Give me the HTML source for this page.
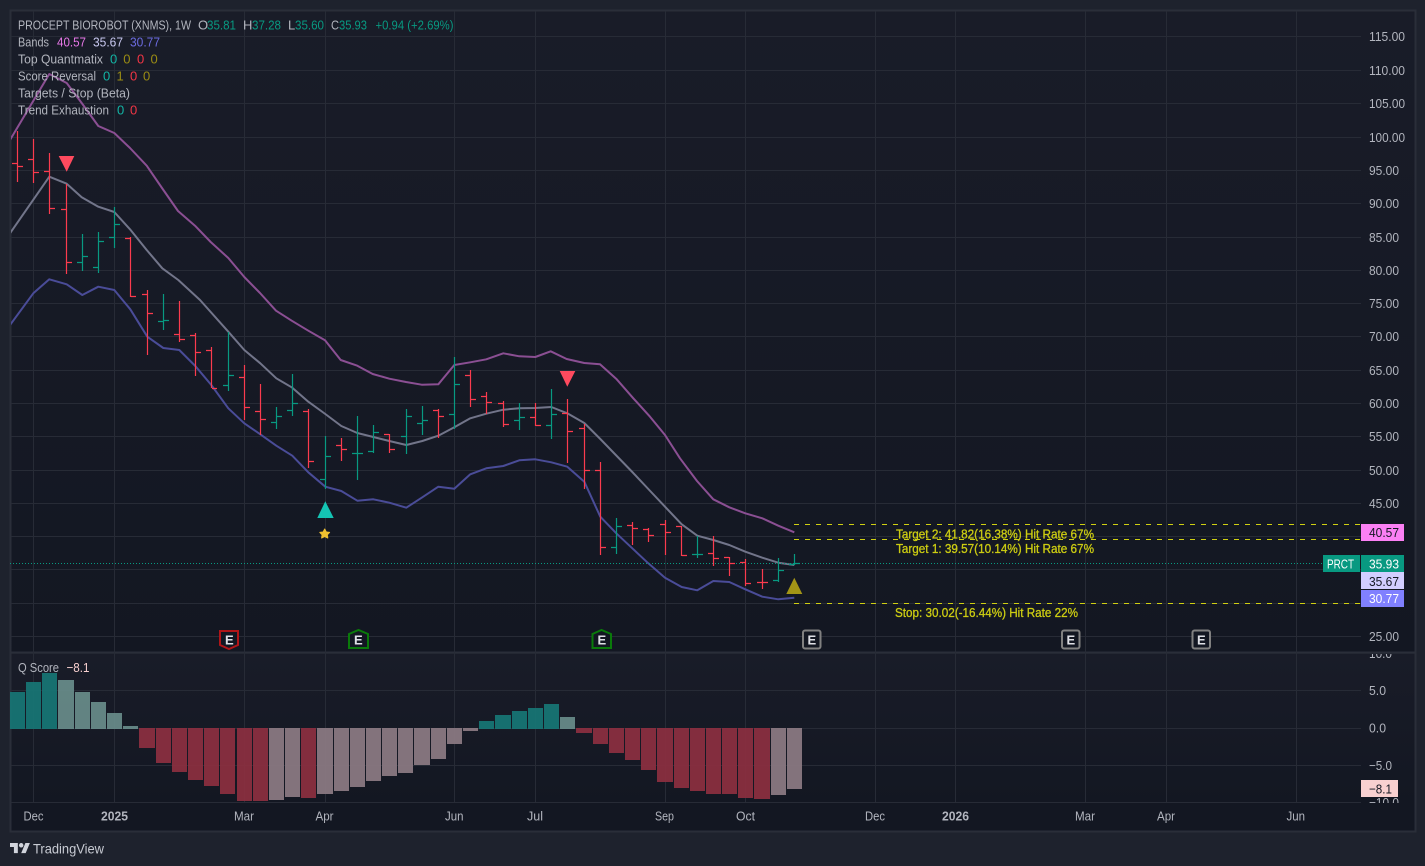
<!DOCTYPE html>
<html><head><meta charset="utf-8"><title>PRCT</title>
<style>
html,body{margin:0;padding:0;width:1425px;height:866px;overflow:hidden;background:#1e222d}
svg{position:absolute;left:0;top:0;display:block}
text{font-family:"Liberation Sans",sans-serif;font-size:13px;fill:#b2b5be}
.g{fill:#089981}.r{fill:#f23645}.t{fill:#12b5a5}.o{fill:#9a8c14}
.a{fill:#b2b5be}
.y{fill:#cdcd12;stroke:#cdcd12;stroke-width:.3}
</style></head><body>
<svg width="1425" height="866" viewBox="0 0 1425 866" xmlns="http://www.w3.org/2000/svg">
<defs>
<linearGradient id="p1" x1="0" y1="0" x2="0" y2="1"><stop offset="0" stop-color="#191c28"/><stop offset="1" stop-color="#131722"/></linearGradient>
<clipPath id="hc"><rect x="1361" y="654" width="54" height="149"/></clipPath>
<clipPath id="mc"><rect x="11" y="11" width="1350" height="641"/></clipPath>
</defs>
<rect width="1425" height="866" fill="#1e222d"/>
<rect x="11" y="11" width="1404" height="641" fill="url(#p1)"/>
<rect x="11" y="654" width="1404" height="149" fill="url(#p1)"/>
<rect x="11" y="803" width="1404" height="28" fill="#131722"/>
<!-- frame -->
<path d="M10.5 10.5H1415.5V831.5H10.5Z" fill="none" stroke="#2a2e39" stroke-width="2"/>
<path d="M11 652.5H1415" stroke="#2a2e39" stroke-width="2"/>
<!-- grid -->
<path stroke="#272b36" stroke-width="1" fill="none" d="M11 36.5H1361M11 70.5H1361M11 103.5H1361M11 137.5H1361M11 170.5H1361M11 203.5H1361M11 237.5H1361M11 270.5H1361M11 303.5H1361M11 336.5H1361M11 370.5H1361M11 403.5H1361M11 436.5H1361M11 470.5H1361M11 503.5H1361M11 536.5H1361M11 569.5H1361M11 603.5H1361M11 636.5H1361M11 690.5H1361M11 728.5H1361M11 765.5H1361M11 802.5H1361M33.5 11V802M114.5 11V802M244.5 11V802M325.5 11V802M454.5 11V802M535.5 11V802M665.5 11V802M745.5 11V802M875.5 11V802M955.5 11V802M1085.5 11V802M1166.5 11V802M1296.5 11V802"/>
<!-- histogram -->
<g opacity=".93">
<path fill="#177675" d="M10 692h15v37h-15zM26 682h15v47h-15zM42 673h15v56h-15zM479 721h15v8h-15zM495 715h16v14h-16zM512 711h15v18h-15zM528 708h15v21h-15zM544 704h15v25h-15z"/>
<path fill="#688c8a" d="M58 680h16v49h-16zM75 692h15v37h-15zM91 702h15v27h-15zM107 713h15v16h-15zM123 726h15v3h-15zM560 717h15v12h-15z"/>
<path fill="#8c2f40" d="M139 728h16v20h-16zM156 728h15v35h-15zM172 728h15v44h-15zM188 728h15v52h-15zM204 728h15v58h-15zM220 728h15v66h-15zM237 728h15v73h-15zM253 728h15v73h-15zM301 728h15v70h-15zM576 728h16v5h-16zM593 728h15v16h-15zM609 728h15v25h-15zM625 728h15v32h-15zM641 728h15v42h-15zM657 728h16v54h-16zM674 728h15v60h-15zM690 728h15v63h-15zM706 728h15v66h-15zM722 728h15v66h-15zM738 728h15v70h-15zM754 728h16v71h-16z"/>
<path fill="#8c7a83" d="M269 728h15v72h-15zM285 728h15v69h-15zM317 728h16v66h-16zM334 728h15v63h-15zM350 728h15v59h-15zM366 728h15v53h-15zM382 728h15v48h-15zM398 728h15v45h-15zM414 728h16v37h-16zM431 728h15v31h-15zM447 728h15v16h-15zM463 728h15v3h-15zM771 728h15v67h-15zM787 728h15v61h-15z"/>
</g>
<g clip-path="url(#mc)">
<!-- bands -->
<g fill="none" stroke-width="2" stroke-linejoin="round">
<path stroke="#8b4f93" d="M10 140L49.3 74L66.7 83L81.7 103L98.3 126L114.3 133L130 148L146.7 165.7L162 188L178 211L195 225.7L210.7 242L228.3 258L244.3 277L260 293L276 310.7L291.7 320.7L308.3 330.7L325 340.3L340.7 360L357.3 365.7L372.7 374L389.3 378.7L406 382L421.7 384.7L438.3 384.3L454.3 365L470.3 362.3L486.3 359.3L503.3 353.3L519.3 356.3L535.3 357L550.7 351.3L566.7 359L584.3 363L600 364.3L616.7 379.3L633.3 398.3L650 416.7L665 435L680 458.3L697 481L713.3 499.3L729.3 507.3L745.3 513.3L762.3 518.3L778.3 525.7L794.3 532.3"/>
<path stroke="#72758a" d="M10 233.3L49.3 176.7L66.7 183.7L81.7 197.3L98.3 206.7L114.3 212L130 229.3L146.7 250L162.3 268.3L178.3 280L200 300L228.3 331.7L244.3 350L260.3 363.3L276.3 378.3L292.3 387.7L308.3 401.7L325.3 414L341.3 426L357.3 433L373.3 437L389.3 441L406.3 445L422.3 441L438.3 435.7L454.3 427.3L470.3 418.3L486.3 413.7L503.3 409.7L519.3 408.3L535.3 408L551.3 407L567.3 413.3L584.3 423L600.3 439L616.3 455.5L632.3 472L648.3 489L665 506.7L681.7 524.3L697.3 535.7L713.3 540L729.3 545L745.3 551.7L762.3 557.7L778.3 562.7L794.3 565"/>
<path stroke="#4a4c98" d="M10 325L33.3 293.3L49.3 279.3L66.7 284.3L82.3 295L98.3 286.7L114.3 290L130.3 309.3L147.3 336.7L163.3 348L179.3 350L195.3 366L211.3 385L228.3 408.3L244.3 423.3L260.3 434.3L276.3 445.7L292.3 455.7L308.3 472.3L325.3 486.7L341.3 491L357.3 500.7L373.3 499.3L389.3 502.7L406.3 507.7L422.3 497.3L438.3 486.7L454.3 488.7L470.3 474.3L486.3 468.3L503.3 466L519.3 460.3L535.3 459.3L551.3 462.3L567.3 466.7L584.3 481.7L600.3 516.7L616.3 533.3L632.3 548.3L648.3 563.3L665 577.7L681.7 587L697.3 590.3L713.3 581L729.3 582L745.3 589.3L762.3 596.7L778.3 599.3L794.3 597.7"/>
</g>
</g>
<!-- dotted price line -->
<path d="M10 563.5H1323" stroke="#089981" stroke-width="1" stroke-dasharray="1 2" fill="none"/>
<!-- dashed target lines -->
<path d="M794 524.5H1361M794 539.5H1361M794 603.5H1361" stroke="#d0d012" stroke-width="1" stroke-dasharray="5 6" fill="none"/>
<!-- OHLC bars -->
<path stroke="#fb3b4e" stroke-width="1.2" fill="none" d="M17.5 131V182M12 163.5H17M18 166.5H23M33.5 139V183M28 159.5H33M34 172.5H39M49.5 153V214M44 171.5H49M50 208.5H55M66.5 184V274M61 209.5H66M67 262.5H72M130.5 237V297M125 238.5H130M131 296.5H136M147.5 290V355M142 294.5H147M148 313.5H153M179.5 301V342M174 334.5H179M180 339.5H185M195.5 333V376M190 335.5H195M196 352.5H201M211.5 347V388M206 350.5H211M212 388.5H217M244.5 365V420M239 377.5H244M245 407.5H250M260.5 384V435M255 411.5H260M261 419.5H266M308.5 409V468M303 411.5H308M309 461.5H314M341.5 438V461M336 445.5H341M342 449.5H347M389.5 434V453M384 434.5H389M390 449.5H395M438.5 409V438M433 410.5H438M439 416.5H444M470.5 370V407M465 375.5H470M471 399.5H476M486.5 392V414M481 396.5H486M487 402.5H492M503.5 401V427M498 403.5H503M504 424.5H509M535.5 403V426M530 417.5H535M536 425.5H541M567.5 399V463M562 413.5H567M568 431.5H573M584.5 424V489M579 428.5H584M585 470.5H590M600.5 462V555M595 470.5H600M601 547.5H606M632.5 522V545M627 525.5H632M633 528.5H638M648.5 528V542M643 529.5H648M649 535.5H654M665.5 520V555M660 524.5H665M666 532.5H671M681.5 526V556M676 526.5H681M682 555.5H687M713.5 536V566M708 553.5H713M714 558.5H719M729.5 557V576M724 557.5H729M730 563.5H735M745.5 559V586M740 562.5H745M746 583.5H751M762.5 569V589M757 582.5H762M763 582.5H768"/>
<path stroke="#089981" stroke-width="1.2" fill="none" d="M82.5 234V271M77 262.5H82M83 256.5H88M98.5 232V273M93 267.5H98M99 241.5H104M114.5 207V248M109 237.5H114M115 224.5H120M163.5 294V330M158 321.5H163M164 320.5H169M228.5 332V391M223 385.5H228M229 375.5H234M276.5 407V429M271 422.5H276M277 416.5H282M292.5 374V416M287 410.5H292M293 403.5H298M325.5 436V489M320 479.5H325M326 456.5H331M357.5 416V480M352 453.5H357M358 453.5H363M373.5 425V453M368 451.5H373M374 432.5H379M406.5 409V454M401 436.5H406M407 416.5H412M422.5 406V435M417 423.5H422M423 420.5H428M454.5 357V429M449 414.5H454M455 384.5H460M519.5 403V430M514 420.5H519M520 417.5H525M551.5 389V439M546 425.5H551M552 414.5H557M616.5 518V554M611 547.5H616M617 526.5H622M697.5 536V558M692 554.5H697M698 554.5H703M778.5 558V582M773 580.5H778M779 570.5H784M794.5 554V565M789 564.5H794M795 563.5H800"/>
<!-- markers -->
<path fill="#ff4a5e" d="M58.7 156H74.3L66.7 171.7ZM559.7 371H575.3L567.3 386.7Z"/>
<path fill="#14c4b4" d="M325.3 501.3L333.7 518H317.3Z"/>
<path fill="#a39516" d="M794.3 577.7L802.3 594H786.3Z"/>
<path fill="#efc030" stroke="#efc030" stroke-width="1" stroke-linejoin="round" d="M324.7 529L326.3 532L329.6 532.4L327.3 534.8L327.8 538L324.7 536.6L321.6 538L322.1 534.8L319.8 532.4L323.1 532Z"/>
<!-- earnings badges -->
<g fill="#131722" stroke-width="2">
<path stroke="#b01518" d="M220 631H238V645L229 649L220 645Z"/>
<path stroke="#0a7a0a" d="M349 634L358.5 630L368 634V648H349Z"/>
<path stroke="#0a7a0a" d="M592.5 634L601.5 630L611 634V648H592.5Z"/>
<rect x="803" y="630.5" width="17.5" height="18" rx="2" stroke="#808080"/>
<rect x="1062" y="630.5" width="17.5" height="18" rx="2" stroke="#808080"/>
<rect x="1192.5" y="630.5" width="17.5" height="18" rx="2" stroke="#808080"/>
</g>
<g>
<text x="225" y="644.5" style="fill:#dfe0e6;font-size:13px;font-weight:bold">E</text>
<text x="354" y="644.5" style="fill:#dfe0e6;font-size:13px;font-weight:bold">E</text>
<text x="597.5" y="644.5" style="fill:#dfe0e6;font-size:13px;font-weight:bold">E</text>
<text x="807.5" y="644.5" style="fill:#dfe0e6;font-size:13px;font-weight:bold">E</text>
<text x="1066.5" y="644.5" style="fill:#dfe0e6;font-size:13px;font-weight:bold">E</text>
<text x="1197" y="644.5" style="fill:#dfe0e6;font-size:13px;font-weight:bold">E</text>
</g>
<!-- target text -->
<text class="y" x="896" y="538.5" textLength="198" lengthAdjust="spacingAndGlyphs">Target 2: 41.82(16.38%) Hit Rate 67%</text>
<text class="y" x="896" y="553" textLength="198" lengthAdjust="spacingAndGlyphs">Target 1: 39.57(10.14%) Hit Rate 67%</text>
<text class="y" x="895" y="617" textLength="183" lengthAdjust="spacingAndGlyphs">Stop: 30.02(-16.44%) Hit Rate 22%</text>
<!-- legend -->
<text x="18" y="29.5" textLength="173" lengthAdjust="spacingAndGlyphs">PROCEPT BIOROBOT (XNMS), 1W</text>
<text x="198" y="29.5">O</text><text class="g" x="207" y="29.5" textLength="29" lengthAdjust="spacingAndGlyphs">35.81</text>
<text x="243" y="29.5">H</text><text class="g" x="252" y="29.5" textLength="29" lengthAdjust="spacingAndGlyphs">37.28</text>
<text x="288" y="29.5">L</text><text class="g" x="295" y="29.5" textLength="29" lengthAdjust="spacingAndGlyphs">35.60</text>
<text x="331" y="29.5" textLength="8" lengthAdjust="spacingAndGlyphs">C</text><text class="g" x="339" y="29.5" textLength="28" lengthAdjust="spacingAndGlyphs">35.93</text>
<text class="g" x="375.5" y="29.5" textLength="78" lengthAdjust="spacingAndGlyphs">+0.94 (+2.69%)</text>
<text x="18" y="46.5" textLength="31" lengthAdjust="spacingAndGlyphs">Bands</text>
<text x="57" y="46.5" textLength="29" lengthAdjust="spacingAndGlyphs" style="fill:#e878e8">40.57</text>
<text x="93" y="46.5" textLength="30" lengthAdjust="spacingAndGlyphs" style="fill:#c8c8f0">35.67</text>
<text x="130" y="46.5" textLength="30" lengthAdjust="spacingAndGlyphs" style="fill:#6c6ce0">30.77</text>
<text x="18" y="63.5" textLength="85" lengthAdjust="spacingAndGlyphs">Top Quantmatix</text>
<text class="t" x="110" y="63.5">0</text><text class="o" x="123.3" y="63.5">0</text><text class="r" x="137" y="63.5">0</text><text class="o" x="150.5" y="63.5">0</text>
<text x="18" y="80.5" textLength="78" lengthAdjust="spacingAndGlyphs">Score Reversal</text>
<text class="t" x="103" y="80.5">0</text><text class="o" x="116.5" y="80.5">1</text><text class="r" x="130" y="80.5">0</text><text class="o" x="143" y="80.5">0</text>
<text x="18" y="97.5" textLength="112" lengthAdjust="spacingAndGlyphs">Targets / Stop (Beta)</text>
<text x="18" y="114.5" textLength="91" lengthAdjust="spacingAndGlyphs">Trend Exhaustion</text>
<text class="t" x="117" y="114.5">0</text><text class="r" x="130" y="114.5">0</text>
<text x="18" y="672" textLength="41" lengthAdjust="spacingAndGlyphs">Q Score</text>
<text x="66.5" y="672" textLength="23" lengthAdjust="spacingAndGlyphs" style="fill:#f8d0d0">−8.1</text>
<!-- price axis -->
<g>
<text class="a" x="1369" y="41" textLength="36" lengthAdjust="spacingAndGlyphs">115.00</text>
<text class="a" x="1369" y="75" textLength="36" lengthAdjust="spacingAndGlyphs">110.00</text>
<text class="a" x="1369" y="108" textLength="36" lengthAdjust="spacingAndGlyphs">105.00</text>
<text class="a" x="1369" y="142" textLength="36" lengthAdjust="spacingAndGlyphs">100.00</text>
<text class="a" x="1369" y="175" textLength="30" lengthAdjust="spacingAndGlyphs">95.00</text>
<text class="a" x="1369" y="208" textLength="30" lengthAdjust="spacingAndGlyphs">90.00</text>
<text class="a" x="1369" y="242" textLength="30" lengthAdjust="spacingAndGlyphs">85.00</text>
<text class="a" x="1369" y="275" textLength="30" lengthAdjust="spacingAndGlyphs">80.00</text>
<text class="a" x="1369" y="308" textLength="30" lengthAdjust="spacingAndGlyphs">75.00</text>
<text class="a" x="1369" y="341" textLength="30" lengthAdjust="spacingAndGlyphs">70.00</text>
<text class="a" x="1369" y="375" textLength="30" lengthAdjust="spacingAndGlyphs">65.00</text>
<text class="a" x="1369" y="408" textLength="30" lengthAdjust="spacingAndGlyphs">60.00</text>
<text class="a" x="1369" y="441" textLength="30" lengthAdjust="spacingAndGlyphs">55.00</text>
<text class="a" x="1369" y="475" textLength="30" lengthAdjust="spacingAndGlyphs">50.00</text>
<text class="a" x="1369" y="508" textLength="30" lengthAdjust="spacingAndGlyphs">45.00</text>
<text class="a" x="1369" y="641" textLength="30" lengthAdjust="spacingAndGlyphs">25.00</text>
</g>
<rect x="1361" y="524" width="43" height="17" fill="#fb80f4"/>
<text x="1369" y="537" textLength="30" lengthAdjust="spacingAndGlyphs" style="fill:#131722">40.57</text>
<rect x="1323" y="555" width="37" height="17" fill="#089981"/>
<text x="1327" y="568.5" textLength="27" lengthAdjust="spacingAndGlyphs" style="fill:#fff">PRCT</text>
<rect x="1361" y="555" width="43" height="17" fill="#089981"/>
<text x="1369" y="568.5" textLength="30" lengthAdjust="spacingAndGlyphs" style="fill:#fff">35.93</text>
<rect x="1361" y="572" width="43" height="17" fill="#d2ceff"/>
<text x="1369" y="586" textLength="30" lengthAdjust="spacingAndGlyphs" style="fill:#131722">35.67</text>
<rect x="1361" y="590" width="43" height="17" fill="#8080ff"/>
<text x="1369" y="603" textLength="30" lengthAdjust="spacingAndGlyphs" style="fill:#fff">30.77</text>
<!-- score axis -->
<g clip-path="url(#hc)">
<text class="a" x="1369" y="658" textLength="23" lengthAdjust="spacingAndGlyphs">10.0</text>
<text class="a" x="1369" y="807" textLength="30" lengthAdjust="spacingAndGlyphs">−10.0</text>
</g>
<text class="a" x="1369" y="695" textLength="17" lengthAdjust="spacingAndGlyphs">5.0</text>
<text class="a" x="1369" y="732.5" textLength="17" lengthAdjust="spacingAndGlyphs">0.0</text>
<text class="a" x="1369" y="770" textLength="23" lengthAdjust="spacingAndGlyphs">−5.0</text>
<rect x="1361" y="780" width="37" height="17" fill="#f8d0d0"/>
<text x="1369" y="793.5" textLength="23" lengthAdjust="spacingAndGlyphs" style="fill:#131722">−8.1</text>
<!-- time axis -->
<text class="a" x="23.5" y="820.5" textLength="20" lengthAdjust="spacingAndGlyphs">Dec</text>
<text class="a" x="101" y="820.5" textLength="27" lengthAdjust="spacingAndGlyphs" style="font-weight:bold">2025</text>
<text class="a" x="234" y="820.5" textLength="20" lengthAdjust="spacingAndGlyphs">Mar</text>
<text class="a" x="315.5" y="820.5" textLength="18" lengthAdjust="spacingAndGlyphs">Apr</text>
<text class="a" x="445" y="820.5" textLength="18.5" lengthAdjust="spacingAndGlyphs">Jun</text>
<text class="a" x="527" y="820.5" textLength="16" lengthAdjust="spacingAndGlyphs">Jul</text>
<text class="a" x="655" y="820.5" textLength="19" lengthAdjust="spacingAndGlyphs">Sep</text>
<text class="a" x="736" y="820.5" textLength="19" lengthAdjust="spacingAndGlyphs">Oct</text>
<text class="a" x="865" y="820.5" textLength="20" lengthAdjust="spacingAndGlyphs">Dec</text>
<text class="a" x="942" y="820.5" textLength="27" lengthAdjust="spacingAndGlyphs" style="font-weight:bold">2026</text>
<text class="a" x="1075" y="820.5" textLength="20" lengthAdjust="spacingAndGlyphs">Mar</text>
<text class="a" x="1157" y="820.5" textLength="18" lengthAdjust="spacingAndGlyphs">Apr</text>
<text class="a" x="1286.5" y="820.5" textLength="18.5" lengthAdjust="spacingAndGlyphs">Jun</text>
<!-- logo -->
<g transform="translate(10 840.8) scale(.56)" fill="#d1d4dc">
<path d="M14 22H7V11H0V4h14v18ZM28 22h-8l7.5-18h8L28 22Z"/><circle cx="20" cy="8" r="4"/>
</g>
<text x="33" y="853.5" textLength="71" lengthAdjust="spacingAndGlyphs" style="fill:#c8cbd3;font-size:14px">TradingView</text>
</svg>
</body></html>
